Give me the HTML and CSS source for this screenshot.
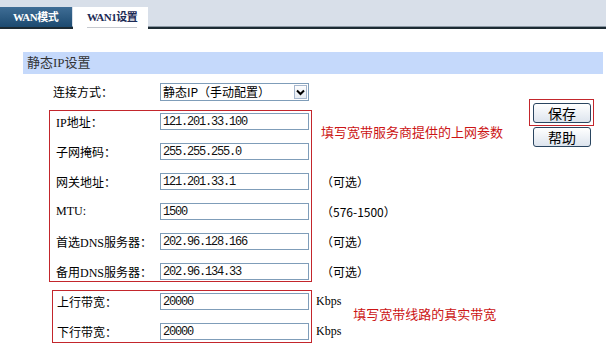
FILE: index.html
```html
<!DOCTYPE html>
<html lang="zh-CN">
<head>
    <meta charset="UTF-8">
    <title>WAN1设置</title>
    <link rel="stylesheet" href="styles.css">
</head>
<body>
    <div class="tabs">
        <div class="tab">WAN模式</div>
        <div class="tab active"><span>WAN1设置</span></div>
    </div>

    <div class="page">
        <div class="section-title">静态IP设置</div>

        <div class="content">
            <div class="form">
                <div class="row top-row">
                    <label>连接方式：</label>
                    <div class="select">
                        <span class="select-text">静态IP（手动配置）</span>
                        <span class="arrow">
                            <svg width="9" height="7" viewBox="0 0 9 7"><path d="M1 1.5 L4.5 5 L8 1.5" fill="none" stroke="#000" stroke-width="2"/></svg>
                        </span>
                    </div>
                </div>

                <!-- ISP parameters -->
                <div class="group">
                    <div class="box box-wan">
                        <div class="row"><label>IP地址：</label><input type="text" value="121.201.33.100"></div>
                        <div class="row"><label>子网掩码：</label><input type="text" value="255.255.255.0"></div>
                        <div class="row"><label>网关地址：</label><input type="text" value="121.201.33.1"></div>
                        <div class="row"><label>MTU:</label><input type="text" value="1500"></div>
                        <div class="row"><label>首选DNS服务器：</label><input type="text" value="202.96.128.166"></div>
                        <div class="row"><label>备用DNS服务器：</label><input type="text" value="202.96.134.33"></div>
                    </div>
                    <div class="notes">
                        <div class="note hint hint-wan">填写宽带服务商提供的上网参数</div>
                        <div class="note">（可选）</div>
                        <div class="note">（576-1500）</div>
                        <div class="note">（可选）</div>
                        <div class="note">（可选）</div>
                    </div>
                </div>

                <!-- bandwidth -->
                <div class="group group-bw">
                    <div class="box box-bw">
                        <div class="row"><label>上行带宽：</label><input type="text" value="20000"></div>
                        <div class="row"><label>下行带宽：</label><input type="text" value="20000"></div>
                    </div>
                    <div class="notes units">
                        <div class="note">Kbps</div>
                        <div class="note">Kbps</div>
                    </div>
                    <div class="hint hint-bw">填写宽带线路的真实带宽</div>
                </div>
            </div>

            <div class="actions">
                <div class="save-wrap"><button class="btn">保存</button></div>
                <button class="btn btn-help">帮助</button>
            </div>
        </div>
    </div>
</body>
</html>
```

FILE: styles.css
```css
/* Base */
body {
    margin: 0;
    background-color: #fff;
    color: #000;
    font-family: "Liberation Serif", "Noto Sans CJK SC", serif;
    font-size: 12px;
}

/* Tab bar */
.tabs {
    display: flex;
    align-items: flex-end;
    height: 27px;
    background-color: #d8dfe9;
    border-bottom: 2px solid #1c2a33;
    box-shadow: inset 0 -1px #8a97a3;
}

.tab {
    width: 72px;
    height: 20px;
    box-sizing: border-box;
    padding-left: 13px;
    line-height: 20px;
    font-size: 11px;
    font-weight: bold;
    letter-spacing: -0.5px;
    color: #fff;
    background: linear-gradient(#3f6d95, #1c4a70);
}

.tab.active {
    width: 75px;
    height: 22px;
    margin-left: 1px;
    margin-bottom: -2px;
    padding-left: 14px;
    color: #1b2a55;
    background: #fff;
}

.tab.active span {
    display: inline-block;
    line-height: 20px;
    border-bottom: 1px solid #c6c9cf;
}

/* Page */
.page {
    width: 580px;
    margin-left: 23px;
    margin-top: 23px;
}

.section-title {
    height: 22px;
    line-height: 22px;
    padding-left: 4px;
    background-color: #c5d9fb;
    color: #333;
    font-size: 13px;
}

.content {
    display: flex;
    align-items: flex-start;
    padding-top: 9px;
}

.form {
    padding-left: 26px;
}

/* Rows */
.row {
    display: flex;
    align-items: center;
    height: 17px;
}

.row label {
    width: 104px;
    flex-shrink: 0;
}

.top-row {
    height: 18px;
    padding-left: 4px;
}

.top-row label {
    width: 107px;
}

input {
    width: 149px;
    height: 17px;
    box-sizing: border-box;
    margin: 0;
    padding: 0 0 0 2px;
    border: 1px solid #7f9db9;
    font-family: "Liberation Mono", monospace;
    font-size: 12px;
    letter-spacing: -1.2px;
    color: #111;
}

/* Fake select */
.select {
    display: flex;
    align-items: center;
    justify-content: space-between;
    width: 149px;
    height: 18px;
    box-sizing: border-box;
    border: 1px solid #7f9db9;
    padding: 0 1px 0 2px;
    font-family: "Noto Sans CJK SC", sans-serif;
    font-size: 12px;
}

.select-text {
    line-height: 16px;
}

.arrow {
    display: flex;
    align-items: center;
    justify-content: center;
    width: 13px;
    height: 14px;
    box-sizing: border-box;
    border: 1px solid #a7b7cd;
    background: linear-gradient(#fdfdfe, #e6ebf2);
}

/* Red boxed groups */
.group {
    display: flex;
    align-items: flex-start;
    margin-top: 9px;
}

.box {
    display: flex;
    flex-direction: column;
    gap: 13px;
    border: 1px solid #c3262c;
}

.box-wan {
    padding: 2px 2px 1px 6px;
}

.group-bw {
    margin-top: 8px;
    margin-left: 3px;
    align-items: stretch;
}

.box-bw {
    padding: 2px 2px 2px 4px;
}

.box-bw .row label {
    width: 103px;
}

.notes {
    display: flex;
    flex-direction: column;
    gap: 13px;
    padding-top: 3px;
    margin-left: 9px;
    font-family: "Noto Sans CJK SC", sans-serif;
}

.note {
    height: 17px;
    line-height: 17px;
    white-space: nowrap;
}

.units {
    margin-left: 4px;
    font-family: "Liberation Serif", serif;
}

.hint {
    color: #cc1515;
    font-family: "Noto Sans CJK SC", sans-serif;
    font-size: 13px;
    white-space: nowrap;
}

.hint-wan {
    display: flex;
    align-items: center;
    height: 47px;
    box-sizing: border-box;
    padding-bottom: 10px;
}

.hint-bw {
    display: flex;
    align-items: center;
    margin-left: 12px;
    padding-bottom: 7px;
}

/* Buttons */
.actions {
    margin-left: auto;
    margin-right: 9px;
    margin-top: 16px;
}

.save-wrap {
    border: 1px solid #c3262c;
    padding: 3px 2px 2px 3px;
}

.btn {
    display: block;
    width: 58px;
    height: 20px;
    padding: 0;
    border: 1px solid #2a4560;
    border-radius: 3px;
    background: linear-gradient(#ffffff, #dde4ee);
    font-family: "Noto Sans CJK SC", sans-serif;
    font-size: 14px;
    line-height: 18px;
    color: #000;
}

.btn-help {
    margin-top: 1px;
    margin-left: 4px;
}
```
